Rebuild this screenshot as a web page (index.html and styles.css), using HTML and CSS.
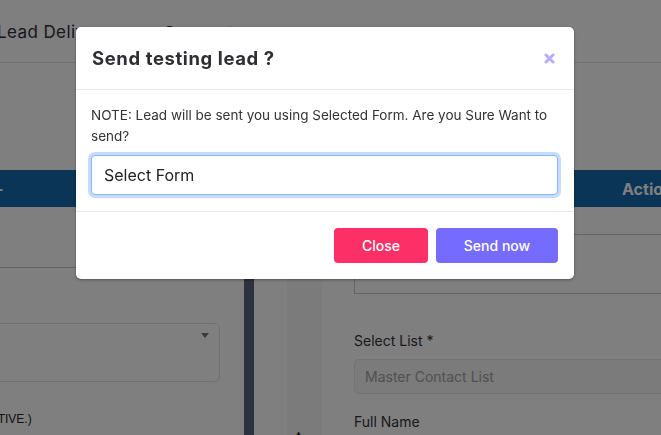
FILE: index.html
```html
<!DOCTYPE html>
<html lang="en">

<head>
    <meta charset="UTF-8">
    <meta name="viewport" content="width=device-width, initial-scale=1.0">
    <title>Lead Delivery</title>
    <link rel="stylesheet" href="styles.css">
</head>

<body>
    <div class="page">
        <div class="topbar">
            <span class="page-title">Lead Delivery</span>
            <span class="page-link"><span class="link-icon">&#9776;</span> Connect</span>
        </div>

        <div class="table-head">
            <span class="th-left">-</span>
            <span class="th-right">Action</span>
        </div>

        <div class="content">
            <div class="left-panel">
                <div class="row"></div>
                <div class="fake-select"><span class="caret"></span></div>
                <div class="status">(INACTIVE.)</div>
            </div>
            <div class="divider"></div>
            <div class="gutter">
                <div class="gutter-strip"><span class="scroll-up">&#9650;</span></div>
            </div>
            <div class="right-panel">
                <div class="textarea"></div>
                <label class="label">Select List *</label>
                <div class="field">Master Contact List</div>
                <label class="label">Full Name</label>
            </div>
        </div>
    </div>

    <div class="backdrop"></div>

    <div class="modal">
        <div class="modal-header">
            <h4>Send testing lead ?</h4>
            <button class="close-x" id="closeX">
                <svg width="11" height="11" viewBox="0 0 11 11">
                    <path d="M2 2 L9 9 M9 2 L2 9" stroke="#b6adff" stroke-width="3" stroke-linecap="round" />
                </svg>
            </button>
        </div>
        <div class="modal-body">
            <p>NOTE: Lead will be sent you using Selected Form. Are you Sure Want to send?</p>
            <select class="form-select" id="form">
                <option>Select Form</option>
            </select>
        </div>
        <div class="modal-footer">
            <button class="btn btn-close" id="close">Close</button>
            <button class="btn btn-send" id="send">Send now</button>
        </div>
    </div>
</body>

</html>
```

FILE: styles.css
```css
* {
    box-sizing: border-box;
}

body {
    margin: 0;
    font-family: Inter, "Noto Sans", sans-serif;
    background-color: #fff;
    color: #333;
    overflow: hidden;
    height: 435px;
}

.page {
    width: 661px;
    height: 435px;
    overflow: hidden;
}

.topbar {
    height: 63px;
    border-bottom: 1px solid #e4e4e4;
    display: flex;
    align-items: center;
    gap: 26px;
    padding-top: 1px;
    margin-left: -3px;
    font-size: 17px;
    color: #2e2e3a;
    letter-spacing: 0.4px;
}

.link-icon {
    font-size: 14px;
    margin-right: 6px;
}

.page-link {
    padding-top: 3px;
}

.table-head {
    margin-top: 107px;
    height: 37px;
    background-color: #156aad;
    color: #fff;
    display: flex;
    align-items: center;
    justify-content: space-between;
    font-weight: bold;
    font-size: 16px;
}

.th-left {
    margin-left: -4px;
}

.th-right {
    margin-right: -12px;
    color: #fefefe;
}

.content {
    display: flex;
    height: 230px;
}

.left-panel {
    width: 244px;
    flex-shrink: 0;
}

.row {
    height: 61px;
    border-bottom: 1px solid #c4c4c4;
}

.fake-select {
    margin-top: 55px;
    margin-left: -10px;
    width: 230px;
    height: 59px;
    border: 1px solid #e2e2e2;
    border-radius: 5px;
    position: relative;
}

.caret {
    position: absolute;
    right: 10px;
    top: 9px;
    border-left: 4px solid transparent;
    border-right: 4px solid transparent;
    border-top: 5px solid #777;
}

.status {
    margin-top: 30px;
    margin-left: -35px;
    font-family: "Liberation Sans", Arial, sans-serif;
    font-size: 12px;
    color: #222;
}

.divider {
    width: 10px;
    flex-shrink: 0;
    background-color: #56657a;
}

.gutter {
    width: 68px;
    flex-shrink: 0;
    padding-left: 33px;
}

.gutter-strip {
    height: 100%;
    background-color: #f6f6f6;
    position: relative;
}

.scroll-up {
    position: absolute;
    left: 8px;
    bottom: -2px;
    font-size: 7px;
    color: #222;
}

.right-panel {
    flex: 1;
    min-width: 0;
    padding-left: 32px;
    display: flex;
    flex-direction: column;
    align-items: flex-start;
}

.textarea {
    margin-top: 27px;
    width: 340px;
    flex-shrink: 0;
    height: 60px;
    border: 1px solid #c8c8c8;
    border-right: none;
}

.label {
    margin-top: 38px;
    font-size: 14px;
    color: #333;
}

.field {
    margin-top: 10px;
    width: 340px;
    flex-shrink: 0;
    height: 35px;
    padding: 8px 10px;
    border: 1px solid #e4e4e4;
    border-radius: 5px;
    background-color: #f6f6f6;
    font-size: 14px;
    color: #a2a2a2;
}

.field + .label {
    margin-top: 19px;
}

.backdrop {
    position: fixed;
    inset: 0;
    background-color: rgba(0, 0, 0, 0.5);
}

.modal {
    position: absolute;
    left: 76px;
    top: 27px;
    width: 498px;
    background: #fff;
    border-radius: 5px;
    box-shadow: 0 1px 3px rgba(0, 0, 0, 0.35);
}

.modal-header {
    height: 63px;
    padding: 0 16px;
    display: flex;
    align-items: center;
    justify-content: space-between;
    border-bottom: 1px solid #e7e7ee;
}

.modal-header h4 {
    margin: 0;
    font-size: 18.5px;
    font-weight: 700;
    letter-spacing: 0.6px;
    color: #2f2f33;
}

.close-x {
    border: none;
    background: none;
    padding: 0;
    margin-right: 3px;
    display: flex;
    cursor: pointer;
}

.modal-body {
    padding: 15px 16px 16px 15px;
    border-bottom: 1px solid #e7e7ee;
}

.modal-body p {
    margin: 0 0 8px;
    font-size: 13.5px;
    line-height: 21px;
    color: #333;
}

.form-select {
    width: 100%;
    height: 40px;
    padding: 0 12px;
    font-family: inherit;
    font-size: 16px;
    color: #222;
    background: #fff;
    border: 1px solid #86b7fe;
    border-radius: 4px;
    box-shadow: 0 0 0 3px #c6dcfd;
    appearance: none;
    -webkit-appearance: none;
    outline: none;
}

.modal-footer {
    padding: 16px;
    display: flex;
    justify-content: flex-end;
    gap: 8px;
}

.btn {
    height: 35px;
    border: none;
    border-radius: 4px;
    color: #fff;
    font-family: inherit;
    font-size: 14px;
    font-weight: 500;
    cursor: pointer;
}

.btn-close {
    width: 94px;
    background-color: #fc2f66;
}

.btn-send {
    width: 122px;
    background-color: #766bff;
}
```
